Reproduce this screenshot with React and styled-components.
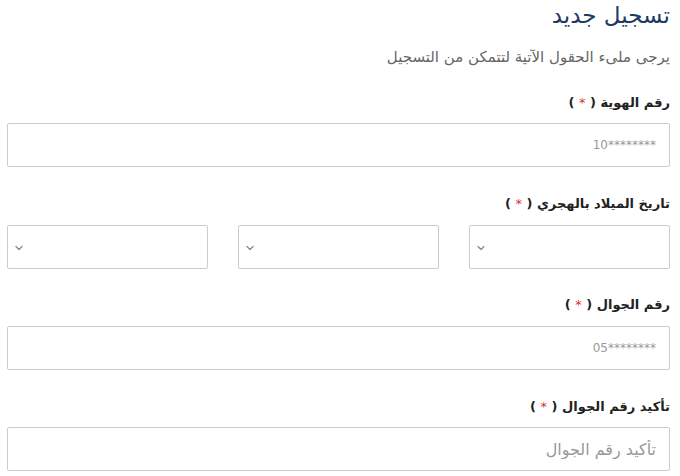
import React from 'react'
import styled, { createGlobalStyle } from 'styled-components'
import { ChevronDown } from 'lucide-react'

const Global = createGlobalStyle`
  body {
    margin: 0;
    background: #fff;
    font-family: "DejaVu Sans", "Noto Sans", sans-serif;
  }
`

const Page = styled.div`
  direction: rtl;
  padding: 0 10px 0 7px;
  width: 680px;
  box-sizing: border-box;
`

const Title = styled.h1`
  margin: 0;
  font-size: 23px;
  font-weight: normal;
  color: #1c3a64;
  line-height: 30px;
`

const Subtitle = styled.p`
  margin: 17px 0 0;
  font-size: 15px;
  color: #666;
  line-height: 20px;
`

const Field = styled.div`
  margin-top: ${p => p.top}px;
`

const Label = styled.label`
  display: block;
  font-size: 13px;
  font-weight: bold;
  color: #222;
  line-height: 20px;
  margin-bottom: ${p => p.gap || 10}px;
  span { color: #d33; font-weight: normal; }
`

const Input = styled.input`
  display: block;
  width: 100%;
  box-sizing: border-box;
  height: 44px;
  border: 1px solid #ccc;
  border-radius: 2px;
  padding: 0 13px;
  font-family: inherit;
  font-size: ${p => p.size || 12}px;
  direction: ${p => (p.ltr ? 'ltr' : 'rtl')};
  text-align: right;
  outline: none;
  &::placeholder { color: #999; }
`

const SelectRow = styled.div`
  display: grid;
  grid-template-columns: repeat(3, 1fr);
  gap: 30px;
`

const Select = styled.div`
  height: 44px;
  border: 1px solid #ccc;
  border-radius: 2px;
  box-sizing: border-box;
  display: flex;
  align-items: center;
  justify-content: flex-end;
  padding: 2px 0 0 5px;
  color: #8a8a8a;
`

const Req = () => <> ( <span>*</span> )</>

export default function App() {
  return (
    <Page>
      <Global />
      <Title>تسجيل جديد</Title>
      <Subtitle>يرجى ملىء الحقول الآتية لتتمكن من التسجيل</Subtitle>
      <Field top={26}>
        <Label>رقم الهوية<Req /></Label>
        <Input ltr placeholder="10********" />
      </Field>
      <Field top={27}>
        <Label gap={11}>تاريخ الميلاد بالهجري<Req /></Label>
        <SelectRow>
          <Select><ChevronDown size={12} strokeWidth={2.5} /></Select>
          <Select><ChevronDown size={12} strokeWidth={2.5} /></Select>
          <Select><ChevronDown size={12} strokeWidth={2.5} /></Select>
        </SelectRow>
      </Field>
      <Field top={26}>
        <Label gap={11}>رقم الجوال<Req /></Label>
        <Input ltr placeholder="05********" />
      </Field>
      <Field top={27}>
        <Label>تأكيد رقم الجوال<Req /></Label>
        <Input size={16} placeholder="تأكيد رقم الجوال" />
      </Field>
    </Page>
  )
}
